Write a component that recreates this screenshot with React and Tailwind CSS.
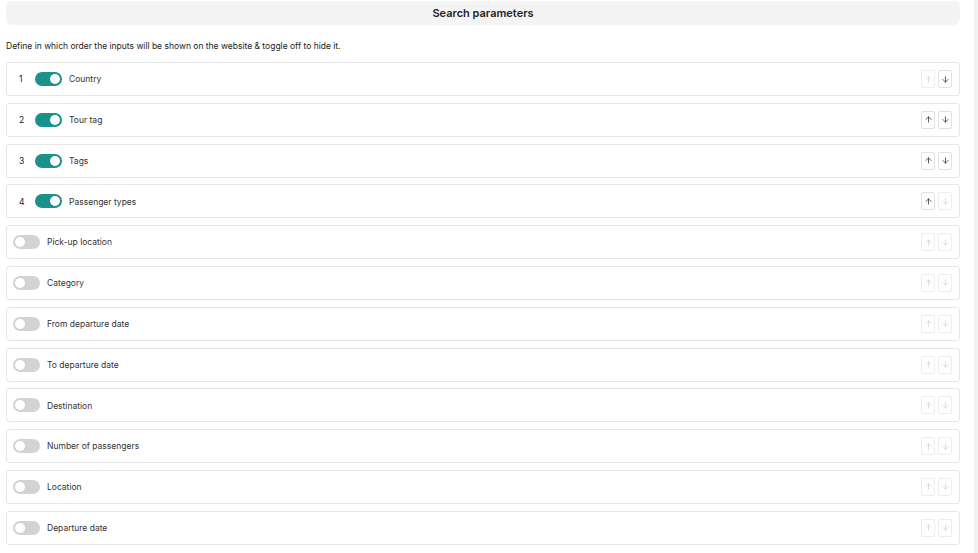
import React, { useState } from 'react';
import { ArrowUp, ArrowDown } from 'lucide-react';

const initialFields = [
    { name: 'Country', on: true },
    { name: 'Tour tag', on: true },
    { name: 'Tags', on: true },
    { name: 'Passenger types', on: true },
    { name: 'Pick-up location', on: false },
    { name: 'Category', on: false },
    { name: 'From departure date', on: false },
    { name: 'To departure date', on: false },
    { name: 'Destination', on: false },
    { name: 'Number of passengers', on: false },
    { name: 'Location', on: false },
    { name: 'Departure date', on: false }
];

const Toggle = ({ on, onClick }) => (
    <button
        onClick={onClick}
        className={`relative w-[27px] h-[14px] rounded-full border-none p-0 cursor-pointer shrink-0 ${on ? 'bg-[#1b918d]' : 'bg-[#d3d3d3]'}`}
    >
        <span
            className={`absolute top-[2px] w-[10px] h-[10px] rounded-full bg-white ${on ? 'left-[15px]' : 'left-[2px]'}`}
        />
    </button>
);

const MoveButton = ({ dir, enabled }) => {
    const Icon = dir === 'up' ? ArrowUp : ArrowDown;
    return (
        <button
            disabled={!enabled}
            className={`w-[14px] h-[18px] flex items-center justify-center rounded-[2px] border bg-white p-0 ${enabled ? 'border-[#e2e2e2] text-[#2b2b2b]' : 'border-[#ededed] text-[#cfcfcf]'}`}
        >
            <Icon size={9} strokeWidth={2} />
        </button>
    );
};

const App = () => {
    const [fields, setFields] = useState(initialFields);
    const activeCount = fields.filter((f) => f.on).length;

    const toggle = (i) => {
        setFields((prev) => prev.map((f, idx) => (idx === i ? { ...f, on: !f.on } : f)));
    };

    return (
        <div className="w-[978px] h-[553px] bg-white flex overflow-hidden" style={{ fontFamily: 'Inter, "Noto Sans", sans-serif' }}>
            <div className="flex-1 pl-[6px] pr-[14px] pt-[1px] flex flex-col">
                <div className="h-[24px] rounded-[6px] bg-[#f4f4f4] flex items-center justify-center text-[11px] font-semibold text-[#222]">
                    Search parameters
                </div>
                <p className="m-0 mt-[15px] text-[8.5px] text-[#222] leading-[12px]">
                    Define in which order the inputs will be shown on the website &amp; toggle off to hide it.
                </p>
                <div className="mt-[10px] flex flex-col gap-[6.8px]">
                    {fields.map((f, i) => {
                        const upEnabled = f.on && i > 0;
                        const downEnabled = f.on && i < activeCount - 1;
                        return (
                            <div
                                key={f.name}
                                className="h-[34px] shrink-0 border border-[#e6e6e6] rounded-[3px] flex items-center pl-[6px] pr-[7px]"
                            >
                                {f.on && (
                                    <span className="w-[22px] pl-[6px] text-[8.5px] text-[#222] pt-[1px]">{i + 1}</span>
                                )}
                                <Toggle on={f.on} onClick={() => toggle(i)} />
                                <span className="ml-[7px] text-[8.5px] text-[#333] pt-[1px]">{f.name}</span>
                                <div className="ml-auto flex gap-[3px]">
                                    <MoveButton dir="up" enabled={upEnabled} />
                                    <MoveButton dir="down" enabled={downEnabled} />
                                </div>
                            </div>
                        );
                    })}
                </div>
            </div>
            <div className="w-[4px] h-full bg-[#f2f2f2]" />
        </div>
    );
};

export default App;
